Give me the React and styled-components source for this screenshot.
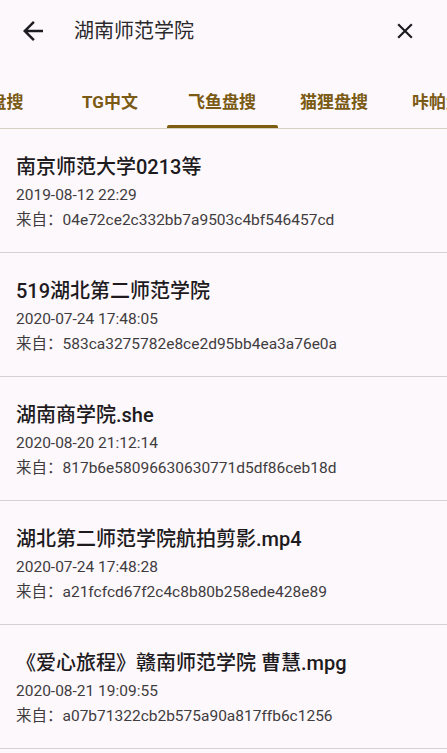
import React, { useEffect, useRef } from 'react';
import styled, { createGlobalStyle } from 'styled-components';
import { MdArrowBack, MdClose } from 'react-icons/md';

const GlobalStyle = createGlobalStyle`
    html, body {
        margin: 0;
        padding: 0;
        background: #fdf8fb;
    }
    body {
        font-family: Roboto, "Noto Sans CJK SC", sans-serif;
    }
`;

const tabs = ['网盘搜', 'TG中文', '飞鱼盘搜', '猫狸盘搜', '咔帕盘搜', '小纸盘搜'];

const results = [
    { id: 1, name: '南京师范大学0213等', time: '2019-08-12 22:29', from: '04e72ce2c332bb7a9503c4bf546457cd' },
    { id: 2, name: '519湖北第二师范学院', time: '2020-07-24 17:48:05', from: '583ca3275782e8ce2d95bb4ea3a76e0a' },
    { id: 3, name: '湖南商学院.she', time: '2020-08-20 21:12:14', from: '817b6e58096630630771d5df86ceb18d' },
    { id: 4, name: '湖北第二师范学院航拍剪影.mp4', time: '2020-07-24 17:48:28', from: 'a21fcfcd67f2c4c8b80b258ede428e89' },
    { id: 5, name: '《爱心旅程》赣南师范学院 曹慧.mpg', time: '2020-08-21 19:09:55', from: 'a07b71322cb2b575a90a817ffb6c1256' },
];

function App() {
    const tabRef = useRef(null);

    // 选中的tab居中
    useEffect(() => {
        if (tabRef.current) tabRef.current.scrollLeft = 58;
    }, []);

    return (
        <Page>
            <GlobalStyle />
            <Header>
                <IconButton $size={30}><MdArrowBack size={30} /></IconButton>
                <SearchText>湖南师范学院</SearchText>
                <IconButton $size={26}><MdClose size={26} /></IconButton>
            </Header>
            <TabBar ref={tabRef}>
                {tabs.map((t, i) => (
                    <Tab key={t} $active={i === 2}>{t}</Tab>
                ))}
            </TabBar>
            <List>
                {results.map((r) => (
                    <Item key={r.id}>
                        <Title>{r.name}</Title>
                        <Meta>{r.time}</Meta>
                        <Meta>来自：{r.from}</Meta>
                    </Item>
                ))}
            </List>
        </Page>
    );
}

const Page = styled.div`
    width: 447px;
    min-height: 753px;
    background: #fdf8fb;
`;

const Header = styled.div`
    height: 62px;
    display: flex;
    align-items: center;
    padding: 0 29px 0 18px;
`;

const IconButton = styled.div`
    width: ${(p) => p.$size}px;
    height: ${(p) => p.$size}px;
    display: flex;
    align-items: center;
    justify-content: center;
    color: #1c1b1f;
`;

const SearchText = styled.div`
    flex: 1;
    margin-left: 26px;
    font-size: 20px;
    color: #2a282c;
    line-height: 26px;
`;

const TabBar = styled.div`
    display: flex;
    height: 67px;
    overflow-x: auto;
    border-bottom: 1px solid #d8cfc6;
    box-sizing: border-box;
    scrollbar-width: none;
    &::-webkit-scrollbar {
        display: none;
    }
`;

const Tab = styled.div`
    position: relative;
    flex: 0 0 112px;
    display: flex;
    align-items: center;
    justify-content: center;
    padding-top: 10px;
    box-sizing: border-box;
    font-size: 17px;
    font-weight: 700;
    color: #7a5a14;
    white-space: nowrap;
    &::after {
        content: '';
        display: ${(p) => (p.$active ? 'block' : 'none')};
        position: absolute;
        left: 1px;
        right: 0;
        bottom: 0;
        height: 3px;
        background: #7d5d10;
        border-radius: 2px 2px 0 0;
    }
`;

const List = styled.div`
    display: flex;
    flex-direction: column;
`;

const Item = styled.div`
    padding: 25px 16px 22px;
    border-bottom: 1px solid #d4d0d4;
`;

const Title = styled.div`
    font-size: 20px;
    font-weight: 500;
    line-height: 26px;
    color: #1d1b1e;
`;

const Meta = styled.div`
    margin-top: 5px;
    font-size: 15.5px;
    line-height: 20px;
    color: #3f3c40;
`;

export default App;
